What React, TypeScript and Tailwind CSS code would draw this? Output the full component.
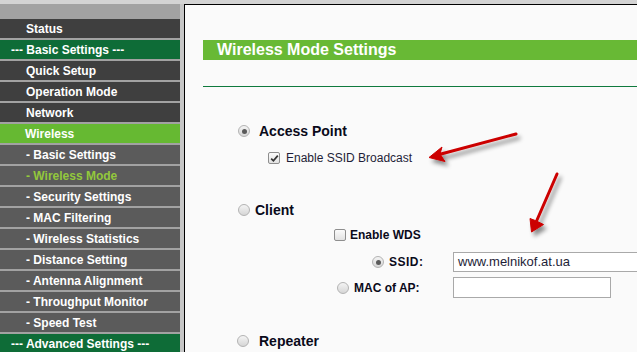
import React from "react";

type Item = { t: string; k: "top" | "group" | "active" | "sub" | "subActive" };

const items: Item[] = [
  { t: "Status", k: "top" },
  { t: "--- Basic Settings ---", k: "group" },
  { t: "Quick Setup", k: "top" },
  { t: "Operation Mode", k: "top" },
  { t: "Network", k: "top" },
  { t: "Wireless", k: "active" },
  { t: "- Basic Settings", k: "sub" },
  { t: "- Wireless Mode", k: "subActive" },
  { t: "- Security Settings", k: "sub" },
  { t: "- MAC Filtering", k: "sub" },
  { t: "- Wireless Statistics", k: "sub" },
  { t: "- Distance Setting", k: "sub" },
  { t: "- Antenna Alignment", k: "sub" },
  { t: "- Throughput Monitor", k: "sub" },
  { t: "- Speed Test", k: "sub" },
  { t: "--- Advanced Settings ---", k: "group" },
];

function rowClass(k: Item["k"]) {
  switch (k) {
    case "top":
      return "bg-[#3f3f3f] text-white pl-[26px]";
    case "group":
      return "bg-[#0e6c37] text-white pl-[11px]";
    case "active":
      return "bg-[#66b932] text-white pl-[25px]";
    case "sub":
      return "bg-[#5b5b5b] text-white pl-[26px]";
    case "subActive":
      return "bg-[#5b5b5b] text-[#93c83c] pl-[26px]";
  }
}

function Radio({ checked }: { checked?: boolean }) {
  return (
    <span className="relative inline-flex w-[12px] h-[12px] shrink-0 rounded-full border border-[#b3b3b3] bg-gradient-to-b from-[#f4f4f4] to-[#d6d6d6] items-center justify-center">
      {checked && <span className="w-[5px] h-[5px] rounded-full bg-[#5a5a5a]" />}
    </span>
  );
}

function Check({ checked }: { checked?: boolean }) {
  return (
    <span className="inline-flex w-[12px] h-[12px] shrink-0 rounded-[2px] border border-[#8e8e8e] bg-gradient-to-b from-[#fbfbfb] to-[#e2e2e2] items-center justify-center">
      {checked && (
        <svg width="9" height="9" viewBox="0 0 9 9">
          <path d="M1.2 4.6 L3.4 6.8 L7.8 1.6" fill="none" stroke="#333" strokeWidth="1.7" />
        </svg>
      )}
    </span>
  );
}

export default function App() {
  const font = { fontFamily: '"Liberation Sans", Arial, sans-serif' };
  return (
    <div className="relative w-[637px] h-[352px] overflow-hidden bg-[#d3d3d3] flex flex-col" style={font}>
      <div className="h-[4px] shrink-0" />
      <div className="flex flex-1 min-h-0">
        {/* Sidebar */}
        <div className="w-[180px] shrink-0 bg-[#a2a2a2] pt-[15px] flex flex-col gap-[2px]">
          {items.map((it) => (
            <div
              key={it.t + it.k}
              className={`h-[19px] shrink-0 flex items-center text-[12px] font-bold whitespace-nowrap ${rowClass(it.k)}`}
            >
              {it.t}
            </div>
          ))}
        </div>
        <div className="w-[4px] shrink-0 bg-[#c6c6c6]" />
        {/* Content */}
        <div className="flex-1 border-l border-t border-black bg-[#fafafa] flex flex-col">
          <div className="mt-[35px] ml-[18px] h-[20px] bg-[#68b935] flex items-center pl-[14px] text-white font-bold text-[16px] whitespace-nowrap">
            Wireless Mode Settings
          </div>
          <div className="mt-[26px] ml-[18px] h-px bg-[#0f7a3d]" />

          {/* Access Point */}
          <div className="mt-[34px] h-[20px] flex items-center pl-[53px]">
            <Radio checked />
            <span className="ml-[9px] text-[14px] font-bold text-[#0a0a1a] whitespace-nowrap">Access Point</span>
          </div>
          <div className="mt-[7px] h-[20px] flex items-center pl-[83px]">
            <Check checked />
            <span className="ml-[6px] text-[12px] text-[#1e1e38] whitespace-nowrap">Enable SSID Broadcast</span>
          </div>

          {/* Client */}
          <div className="mt-[32px] h-[20px] flex items-center pl-[53px]">
            <Radio />
            <span className="ml-[5px] text-[14px] font-bold text-[#0a0a1a] whitespace-nowrap">Client</span>
          </div>
          <div className="mt-[5px] h-[20px] flex items-center pl-[149px]">
            <Check />
            <span className="ml-[4px] text-[12px] font-bold text-[#0a0a1a] whitespace-nowrap">Enable WDS</span>
          </div>
          <div className="mt-[7px] h-[20px] flex items-center">
            <div className="w-[268px] shrink-0 flex items-center pl-[187px]">
              <Radio checked />
              <span className="ml-[5px] text-[12px] font-bold text-[#0a0a1a] tracking-[0.5px] whitespace-nowrap">SSID:</span>
            </div>
            <div className="w-[200px] h-[20px] shrink-0 border border-[#a9a9a9] bg-white flex items-center pl-[4px] text-[13px] text-[#1e1e38] whitespace-nowrap">
              www.melnikof.at.ua
            </div>
          </div>
          <div className="mt-[5px] h-[21px] flex items-center">
            <div className="w-[268px] shrink-0 flex items-center pl-[152px]">
              <Radio />
              <span className="ml-[5px] text-[12px] font-bold text-[#0a0a1a] whitespace-nowrap">MAC of AP:</span>
            </div>
            <div className="w-[158px] h-[21px] shrink-0 border border-[#a9a9a9] bg-white" />
          </div>

          {/* Repeater */}
          <div className="mt-[33px] h-[20px] flex items-center pl-[52px]">
            <Radio />
            <span className="ml-[10px] text-[14px] font-bold text-[#0a0a1a] whitespace-nowrap">Repeater</span>
          </div>
        </div>
      </div>

      {/* Red annotation arrows */}
      <svg className="absolute left-0 top-0 pointer-events-none" width="637" height="352" viewBox="0 0 637 352">
        <defs>
          <filter id="sh" x="-20%" y="-20%" width="140%" height="140%">
            <feDropShadow dx="3" dy="4" stdDeviation="2" floodColor="#000" floodOpacity="0.45" />
          </filter>
        </defs>
        <g filter="url(#sh)" fill="#cc0000" stroke="#cc0000">
          <line x1="516" y1="134" x2="441" y2="154" strokeWidth="3" strokeLinecap="round" />
          <polygon points="429,157.5 442,147 440,154 445,161.5" strokeWidth="1" strokeLinejoin="round" />
          <line x1="557" y1="174" x2="537" y2="220" strokeWidth="3" strokeLinecap="round" />
          <polygon points="531.5,232 530,218.5 536.5,221 543.5,224.5" strokeWidth="1" strokeLinejoin="round" />
        </g>
      </svg>
    </div>
  );
}
